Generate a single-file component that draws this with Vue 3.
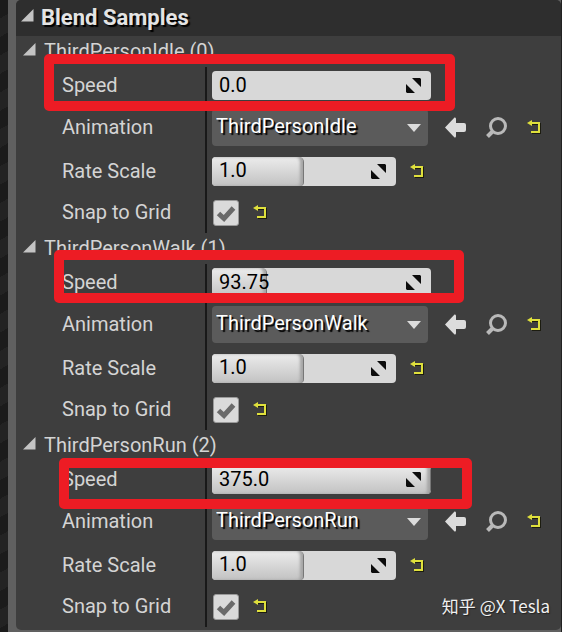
<script setup>
import { reactive } from 'vue'

const maxSpeed = 375

const samples = reactive([
  { name: 'ThirdPersonIdle', speed: '0.0', rate: '1.0', snap: true },
  { name: 'ThirdPersonWalk', speed: '93.75', rate: '1.0', snap: true },
  { name: 'ThirdPersonRun', speed: '375.0', rate: '1.0', snap: true },
])

const animations = ['ThirdPersonIdle', 'ThirdPersonWalk', 'ThirdPersonRun']
const selected = reactive([...animations])

function fillWidth(value, max) {
  const percent = (parseFloat(value) / max) * 100
  return Math.min(100, Math.max(0, percent || 0)) + '%'
}

function resetAnimation(index) {
  selected[index] = animations[index]
}
</script>

<template>
  <div class="editor">
    <div class="gutter"></div>
    <main class="panel">
      <h1 class="panel-title">
        <svg class="caret" viewBox="0 0 13 13"><path d="M12.5 0V12.5H0Z" /></svg>
        Blend Samples
      </h1>

      <section v-for="(sample, i) in samples" :key="i" class="sample">
        <h2 class="sample-title">
          <svg class="caret" viewBox="0 0 13 13"><path d="M12.5 0V12.5H0Z" /></svg>
          {{ sample.name }} ({{ i }})
        </h2>

        <div class="row row--speed">
          <label class="name" :for="'speed' + i">Speed</label>
          <div class="value">
            <div class="spin spin--wide">
              <span
                class="fill"
                :class="{ 'fill--empty': parseFloat(sample.speed) === 0 }"
                :style="{ width: fillWidth(sample.speed, maxSpeed) }"
              ></span>
              <input :id="'speed' + i" v-model="sample.speed" type="text" />
              <svg class="grip" viewBox="0 0 15 15">
                <path d="M6 0H14L15 1V9Z M0 6V14L1 15H9Z" />
              </svg>
            </div>
          </div>
        </div>

        <div class="row row--animation">
          <label class="name" :for="'animation' + i">Animation</label>
          <div class="value value--tools">
            <div class="combo">
              <select :id="'animation' + i" v-model="selected[i]">
                <option v-for="item in animations" :key="item">{{ item }}</option>
              </select>
              <svg class="combo-arrow" viewBox="0 0 14 8"><path d="M0 0H14L7 8Z" /></svg>
            </div>
            <button class="tool" type="button" aria-label="Use selected asset">
              <svg viewBox="0 0 21 21">
                <path
                  fill="#dcdcdc"
                  d="M0 10.5L9.5 0.5Q11 0 11 2V6H19Q21 6 21 8V13Q21 15 19 15H11V19Q11 21 9.5 20.5Z"
                />
              </svg>
            </button>
            <button class="tool" type="button" aria-label="Browse to asset">
              <svg viewBox="0 0 21 21">
                <circle cx="12" cy="9" r="7.500" fill="none" stroke="#b9b9b9" stroke-width="3" />
                <path d="M6.500 14.500L1.500 19.500" stroke="#b9b9b9" stroke-width="4" />
              </svg>
            </button>
            <button class="reset" type="button" aria-label="Reset animation" @click="resetAnimation(i)">
              <svg viewBox="0 0 16 15">
                <path class="reset-shade" d="M3 4H13V13H5" />
                <path class="reset-line" d="M3 3H12V12H4" />
                <path class="reset-head" d="M0 3L5 0V6Z" />
              </svg>
            </button>
          </div>
        </div>

        <div class="row row--rate">
          <label class="name" :for="'rate' + i">Rate Scale</label>
          <div class="value">
            <div class="spin">
              <span class="fill" :style="{ width: fillWidth(sample.rate, 2) }"></span>
              <input :id="'rate' + i" v-model="sample.rate" type="text" />
              <svg class="grip" viewBox="0 0 15 15">
                <path d="M6 0H14L15 1V9Z M0 6V14L1 15H9Z" />
              </svg>
            </div>
            <button class="reset" type="button" aria-label="Reset rate scale" @click="sample.rate = '1.0'">
              <svg viewBox="0 0 16 15">
                <path class="reset-shade" d="M3 4H13V13H5" />
                <path class="reset-line" d="M3 3H12V12H4" />
                <path class="reset-head" d="M0 3L5 0V6Z" />
              </svg>
            </button>
          </div>
        </div>

        <div class="row row--snap">
          <label class="name" :for="'snap' + i">Snap to Grid</label>
          <div class="value value--snap">
            <span class="check">
              <input :id="'snap' + i" v-model="sample.snap" type="checkbox" />
              <svg v-if="sample.snap" viewBox="0 0 26 26">
                <path d="M5.500 13.500L11 18.500L20.500 8" />
              </svg>
            </span>
            <button class="reset" type="button" aria-label="Reset snap to grid" @click="sample.snap = true">
              <svg viewBox="0 0 16 15">
                <path class="reset-shade" d="M3 4H13V13H5" />
                <path class="reset-line" d="M3 3H12V12H4" />
                <path class="reset-head" d="M0 3L5 0V6Z" />
              </svg>
            </button>
          </div>
        </div>

        <div class="marker" :class="'marker--' + i"></div>
      </section>

      <p class="credit">知乎 @X Tesla</p>
    </main>
  </div>
</template>

<style>
body {
  margin: 0;
  background: #fff;
}
</style>

<style scoped>
.editor {
  display: flex;
  min-height: 100vh;
  margin-right: 3px;
  background: #606060;
  border-right: 1px solid #222;
  box-sizing: border-box;
  font-family: Roboto, "Noto Sans CJK SC", sans-serif;
  font-size: 20px;
  color: #d4d4d4;
}

.gutter {
  width: 8px;
  margin-right: 8px;
  background: repeating-linear-gradient(150deg, #1b1b1b 0 16px, #232323 16px 32px);
}

.panel {
  position: relative;
  flex: 1;
  min-width: 0;
  margin-bottom: 2px;
  padding-bottom: 3px;
  box-sizing: border-box;
  background: #3e3e3e;
  border-radius: 5px;
}

.panel-title {
  display: flex;
  align-items: center;
  gap: 7px;
  height: 36px;
  margin: 0;
  padding: 0 0 2px 5px;
  box-sizing: border-box;
  background: #2e2e2e;
  border-radius: 5px 5px 0 0;
  font-size: 22px;
  font-weight: 700;
  color: #e4e4e4;
  text-shadow: 2px 2px 1px #000;
}

.caret {
  width: 13px;
  height: 13px;
  margin-bottom: 3px;
  fill: #c4c4c4;
}

.sample {
  position: relative;
}

.sample-title {
  display: flex;
  align-items: center;
  gap: 8px;
  height: 31px;
  margin: 0;
  padding: 0 0 2px 7px;
  box-sizing: border-box;
  font-size: 20px;
  font-weight: 400;
}

.row {
  display: flex;
}
.row--speed {
  height: 38px;
}
.row--animation {
  height: 45px;
}
.row--rate {
  height: 43px;
}
.row--snap {
  height: 40px;
}

.name {
  display: flex;
  align-items: center;
  width: 191px;
  padding: 0 0 2px 46px;
  box-sizing: border-box;
  border-right: 2px solid #191919;
}

.value {
  display: flex;
  flex: 1;
  align-items: center;
  gap: 14px;
  padding: 0 0 1px 5px;
}
.value--tools {
  gap: 17px;
}
.value--snap {
  padding-left: 6px;
}

.spin {
  position: relative;
  width: 184px;
  height: 29px;
  overflow: hidden;
  background: #d8d8d8;
  border-radius: 4px;
}
.spin--wide {
  width: 219px;
}
.spin input {
  position: relative;
  width: 100%;
  height: 100%;
  padding: 0 30px 2px 7px;
  box-sizing: border-box;
  border: 0;
  background: none;
  font: inherit;
  color: #000;
}

.fill {
  position: absolute;
  top: 0;
  bottom: 0;
  left: 0;
  box-sizing: border-box;
  border-right: 1px solid #777;
  border-radius: 0 5px 4px 0;
  background: linear-gradient(#ececec, #c2c2c2);
  box-shadow: inset -3px 0 3px #a5a5a5;
}
.fill--empty {
  display: none;
}

.grip {
  position: absolute;
  top: 7px;
  right: 10px;
  width: 15px;
  height: 15px;
  fill: #0c0c0c;
  pointer-events: none;
}

.combo {
  position: relative;
  width: 216px;
  height: 37px;
}
.combo select {
  width: 100%;
  height: 100%;
  padding: 0 30px 2px 4px;
  appearance: none;
  border: 0;
  border-radius: 4px;
  background: #5b5b5b;
  font: inherit;
  color: #fff;
  text-shadow: 2px 2px 1px #000;
}
.combo-arrow {
  position: absolute;
  top: 15px;
  right: 7px;
  width: 14px;
  height: 8px;
  fill: #dcdcdc;
  pointer-events: none;
}

button {
  display: flex;
  padding: 0;
  border: 0;
  background: none;
  cursor: pointer;
}
.tool {
  padding-right: 3px;
}
.tool svg {
  width: 21px;
  height: 21px;
}
.reset svg {
  width: 16px;
  height: 15px;
  fill: none;
  stroke-width: 2;
}
.reset-shade {
  stroke: #1c1c10;
}
.reset-line {
  stroke: #dfe03c;
}
.reset-head {
  fill: #dfe03c;
}

.check {
  position: relative;
  width: 26px;
  height: 26px;
}
.check input {
  display: block;
  width: 26px;
  height: 26px;
  margin: 0;
  appearance: none;
  border: 1px solid #9a9a9a;
  border-radius: 3px;
  background: #dadada;
}
.check svg {
  position: absolute;
  inset: 0;
  fill: none;
  stroke: #6a6a6a;
  stroke-width: 5;
  pointer-events: none;
}

/* red frames drawn over the speed rows */
.marker {
  position: absolute;
  box-sizing: border-box;
  border: 10px solid #ed1c24;
  border-radius: 5px;
  pointer-events: none;
}
.marker--0 {
  top: 18px;
  left: 28px;
  width: 411px;
  height: 57px;
}
.marker--1 {
  top: 17px;
  left: 38px;
  width: 410px;
  height: 53px;
}
.marker--2 {
  top: 28px;
  left: 43px;
  width: 413px;
  height: 51px;
}

.credit {
  position: absolute;
  right: 11px;
  bottom: 12px;
  margin: 0;
  font-family: "Noto Sans CJK SC", sans-serif;
  font-size: 17px;
  line-height: 24px;
  color: #f0f0f0;
  text-shadow: 1px 1px 1px #222;
}
</style>
